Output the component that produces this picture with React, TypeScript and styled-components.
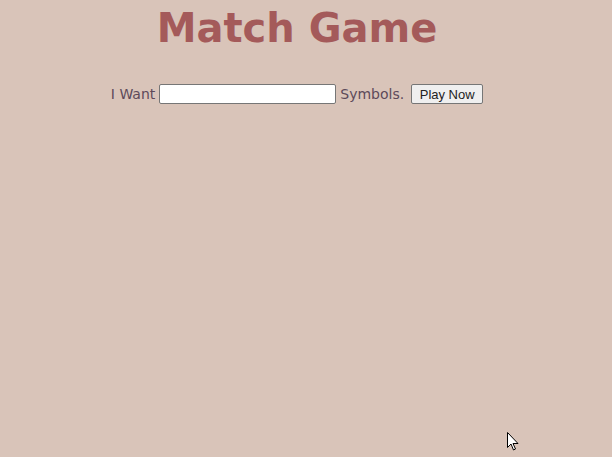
import React from "react";
import styled, { createGlobalStyle } from "styled-components";

const Global = createGlobalStyle`
  html, body { margin: 0; padding: 0; background: #d9c4b9; }
  body { font-family: "DejaVu Sans", Verdana, sans-serif; height: 457px; overflow: hidden; }
`;

const Page = styled.div`
  position: relative;
  height: 457px;
  padding-right: 18px;
  display: flex;
  flex-direction: column;
  align-items: center;
`;

const Title = styled.h1`
  margin: 0;
  padding-top: 4px;
  font-family: "DejaVu Sans", Verdana, sans-serif;
  font-weight: bold;
  font-size: 40px;
  line-height: 48px;
  color: #a45a5a;
`;

const Form = styled.div`
  margin-top: 32px;
  display: flex;
  align-items: center;
  gap: 4px;
  font-size: 14px;
  color: #5d4a5a;
`;

const Input = styled.input`
  width: 177px;
  height: 20px;
  box-sizing: border-box;
  border: 1px solid #767676;
  border-radius: 2px;
  background: #fff;
  padding: 0 2px;
`;

const Button = styled.button`
  margin-left: 3px;
  height: 20px;
  width: 72px;
  box-sizing: border-box;
  border: 1px solid #767676;
  border-radius: 2px;
  background: #efefef;
  font-family: "Liberation Sans", Arial, sans-serif;
  font-size: 13px;
  color: #222;
  padding: 0;
`;

const Cursor = styled.svg`
  position: absolute;
  left: 507px;
  top: 432px;
`;

export default function App() {
  return (
    <Page>
      <Global />
      <Title>Match Game</Title>
      <Form>
        <span>I Want</span>
        <Input type="text" />
        <span>Symbols.</span>
        <Button>Play Now</Button>
      </Form>
      <Cursor width="13" height="20" viewBox="0 0 13 20">
        <path d="M0.5 0.5 L0.5 15.5 L4 12 L6.5 18 L8.5 17 L6 11.5 L11 11.5 Z" fill="#fff" stroke="#000" strokeWidth="1" />
      </Cursor>
    </Page>
  );
}
